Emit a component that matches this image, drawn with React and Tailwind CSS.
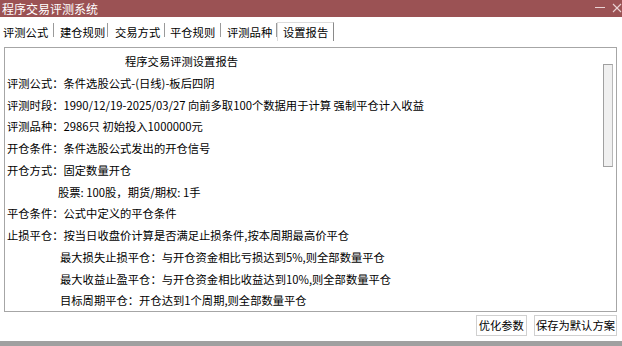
import React from "react";

const tabs = [
  { label: "评测公式", w: "w-[50px]", pl: "pl-[0px]" },
  { label: "建仓规则", w: "w-[53px]", pl: "pl-[6px]" },
  { label: "交易方式", w: "w-[56px]", pl: "pl-[7px]" },
  { label: "平仓规则", w: "w-[55px]", pl: "pl-[5px]" },
  { label: "评测品种", w: "w-[55px]", pl: "pl-[6px]" },
];

const lines = [
  { label: "评测公式：", value: "条件选股公式-(日线)-板后四阴" },
  { label: "评测时段：", value: "1990/12/19-2025/03/27 向前多取100个数据用于计算 强制平仓计入收益" },
  { label: "评测品种：", value: "2986只 初始投入1000000元" },
  { label: "开仓条件：", value: "条件选股公式发出的开仓信号" },
  { label: "开仓方式：", value: "固定数量开仓" },
  { indent: "pl-[51px]", value: "股票: 100股，期货/期权: 1手" },
  { label: "平仓条件：", value: "公式中定义的平仓条件" },
  { label: "止损平仓：", value: "按当日收盘价计算是否满足止损条件,按本周期最高价平仓" },
  { indent: "pl-[53px]", value: "最大损失止损平仓：与开仓资金相比亏损达到5%,则全部数量平仓" },
  { indent: "pl-[53px]", value: "最大收益止盈平仓：与开仓资金相比收益达到10%,则全部数量平仓" },
  { indent: "pl-[53px]", value: "目标周期平仓：开仓达到1个周期,则全部数量平仓" },
];

export default function App() {
  return (
    <div
      className="w-[622px] h-[346px] bg-white flex flex-col overflow-hidden text-black"
      style={{ fontFamily: '"Noto Sans CJK SC", "Noto Sans", sans-serif' }}
    >
      {/* Title bar */}
      <div className="h-[17px] shrink-0 bg-[#9b5254] flex items-center justify-between pl-[2px]">
        <span className="text-[12px] leading-[14px] text-white">程序交易评测系统</span>
        <div className="flex items-center h-full">
          <svg width="27" height="17" viewBox="0 0 27 17" className="block">
            <line x1="0" y1="7.5" x2="10" y2="7.5" stroke="#e9d3d4" strokeWidth="1" />
            <line x1="18" y1="4" x2="26" y2="12" stroke="#e9d3d4" strokeWidth="1.1" />
            <line x1="26" y1="4" x2="18" y2="12" stroke="#e9d3d4" strokeWidth="1.1" />
          </svg>
        </div>
      </div>

      {/* Tabs */}
      <div className="h-[30px] shrink-0 flex items-start pl-[3px] text-[11.3px]">
        {tabs.map((t) => (
          <React.Fragment key={t.label}>
            <div className={`${t.w} ${t.pl} pt-[8px] leading-[14px] whitespace-nowrap`}>{t.label}</div>
            <div className="w-[1px] h-[14px] mt-[6px] bg-[#9a9a9a]" />
          </React.Fragment>
        ))}
        <div className="mt-[5px] h-[19px] w-[57px] border-l border-t border-[#dcdcdc] border-r-[#8a8a8a] border-r pl-[5px] pt-[2px] leading-[14px] whitespace-nowrap">
          设置报告
        </div>
      </div>

      {/* Report panel */}
      <div className="ml-[4px] w-[613px] h-[265px] shrink-0 border border-[#a6a6a6] flex">
        <div className="flex-1 pt-[3px] pl-[2px] text-[11.3px] leading-[21.75px] whitespace-nowrap">
          <div className="pl-[118px]">程序交易评测设置报告</div>
          {lines.map((l, i) => (
            <div key={i} className={l.indent || ""}>
              {l.label}
              {l.value}
            </div>
          ))}
        </div>
        <div className="w-[10px] h-[103px] mt-[16px] mr-[3px] border border-[#a0a0a0] bg-[#f0f0f0] border-r-[#b8b8b8]" />
      </div>

      {/* Buttons */}
      <div className="h-[29px] shrink-0 flex justify-end items-start pt-[3px] pr-[5px] gap-[7px] text-[11.3px]">
        <div className="h-[21px] px-[2px] border border-[#d0d0d0] bg-white leading-[19px] whitespace-nowrap">优化参数</div>
        <div className="h-[21px] px-[1px] border border-[#d0d0d0] bg-white leading-[19px] whitespace-nowrap">保存为默认方案</div>
      </div>

      {/* Bottom bar */}
      <div className="h-[5px] shrink-0 bg-[#a0a0a0]" />
    </div>
  );
}
